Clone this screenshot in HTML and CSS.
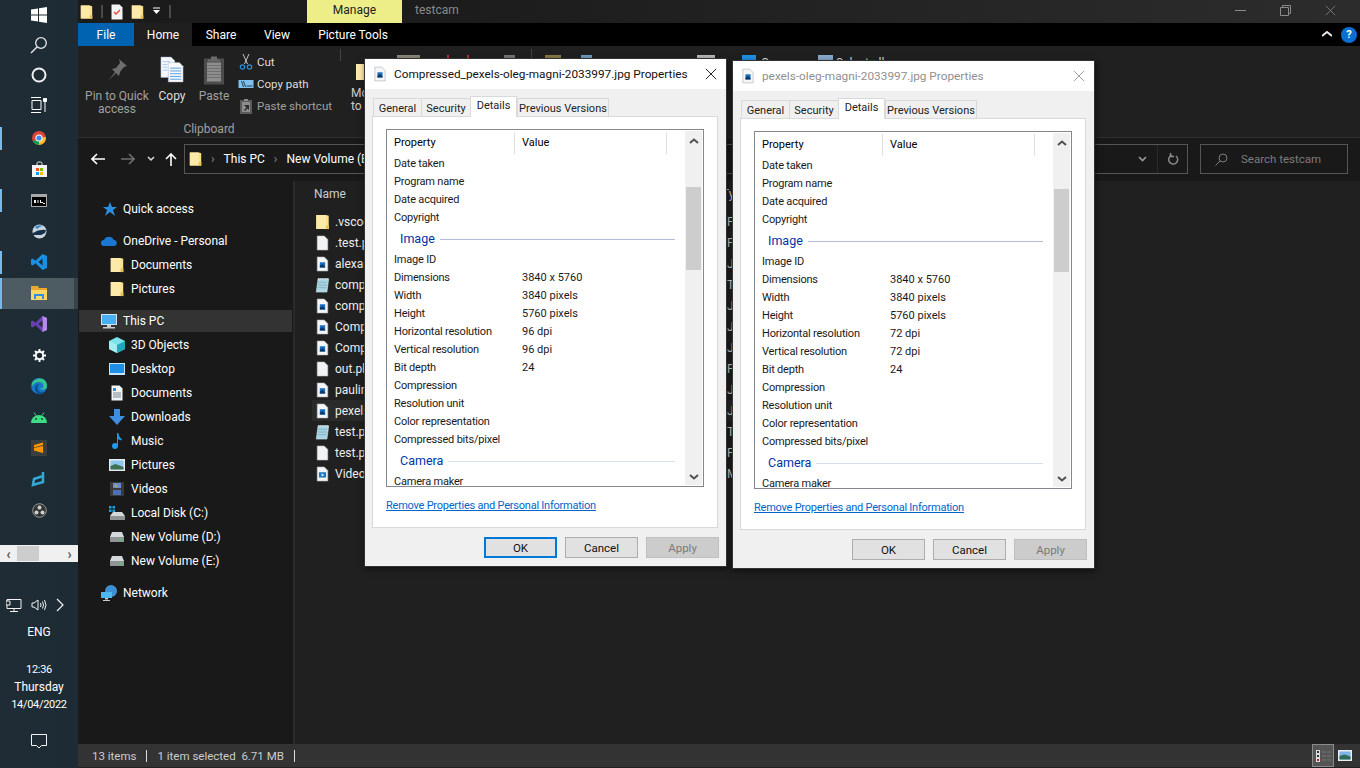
FILE: index.html
```html
<!DOCTYPE html>
<html lang="en">
<head>
<meta charset="utf-8">
<title>testcam</title>
<link rel="stylesheet" href="styles.css">
</head>
<body>
<svg class="defs" width="0" height="0" aria-hidden="true">
  <symbol id="folder" viewBox="0 0 16 18"><path d="M1 1h11l3 1v15H1z" fill="#fbe08a"/><path d="M1 1h11v12h3v4H1z" fill="#fde9a8"/><path d="M12 13h3v4h-3z" fill="#e9bd52"/></symbol>
  <symbol id="pagepic" viewBox="0 0 14 18"><path d="M1 1h8l4 4v12H1z" fill="#f4f6f8" stroke="#9aa0a6" stroke-width=".6"/><path d="M4 7h6v6H4z" fill="#1f6fc0"/><path d="M4 11l3-2 3 3v1H4z" fill="#0c3766"/></symbol>
  <symbol id="page" viewBox="0 0 14 18"><path d="M1 1h8l4 4v12H1z" fill="#f2f3f5" stroke="#a9adb2" stroke-width=".6"/></symbol>
  <symbol id="note" viewBox="0 0 16 18"><path d="M3 2h12l-2 15H1z" fill="#a9d4e2" stroke="#dfeff5" stroke-width=".6"/><path d="M3 2h12" stroke="#fff" stroke-dasharray="1 1"/><path d="M3 6h10M3 9h10M2 12h10" stroke="#6fa3b8" stroke-width=".7"/></symbol>
  <symbol id="vid" viewBox="0 0 14 18"><path d="M1 1h8l4 4v12H1z" fill="#f2f4f6" stroke="#a9adb2" stroke-width=".6"/><path d="M3 7h8v6H3z" fill="#1b78c4"/><path d="M6 8.500l3 1.500-3 1.500z" fill="#fff"/></symbol>
  <symbol id="drive" viewBox="0 0 16 12"><path d="M3 1h10l2 5H1z" fill="#d5d8da"/><path d="M1 6h14v5H1z" fill="#8f9497"/><path d="M11 8h2v1.500h-2z" fill="#45d35a"/></symbol>
  <symbol id="chev-up" viewBox="0 0 10 8"><path d="M1 6l4-3.500L9 6" fill="none" stroke="#505050" stroke-width="2"/></symbol>
  <symbol id="chev-down" viewBox="0 0 10 8"><path d="M1 2l4 3.500L9 2" fill="none" stroke="#505050" stroke-width="2"/></symbol>
  <symbol id="x" viewBox="0 0 14 14"><path d="M1 1l12 12M13 1L1 13" fill="none" stroke="currentColor" stroke-width="1"/></symbol>
</svg>

<aside class="taskbar">
  <div class="tb-icons">
    <div class="tb-slot"><svg width="16" height="16" viewBox="0 0 16 16"><path d="M0 2.500l7-1V7.500H0zM8 1.300l8-1.300v7.500H8zM0 8.500h7v6l-7-1zM8 8.500h8V16l-8-1.200z" fill="#fff"/></svg></div>
    <div class="tb-slot"><svg width="18" height="18" viewBox="0 0 18 18"><circle cx="11" cy="7" r="5.300" fill="none" stroke="#e8e8e8" stroke-width="1.300"/><path d="M7 11l-6 6" stroke="#e8e8e8" stroke-width="1.500"/></svg></div>
    <div class="tb-slot"><svg width="16" height="16" viewBox="0 0 16 16"><circle cx="8" cy="8" r="6.500" fill="none" stroke="#f0f0f0" stroke-width="2"/></svg></div>
    <div class="tb-slot tb-slot-last"><svg width="16" height="16" viewBox="0 0 16 16" fill="none" stroke="#fff"><path d="M0 .5h10M0 15.500h10M1 3.500h9v9H1zM14 5v10"/><path d="M12.500 1.500h3v3h-3z" fill="#fff"/></svg></div>

    <div class="tb-slot is-open"><svg width="14" height="14" viewBox="0 0 14 14"><circle cx="7" cy="7" r="7" fill="#db4437"/><path d="M7 7L1 10.500A7 7 0 0 0 7 14z" fill="#0f9d58"/><path d="M7 7l6.900-1A7 7 0 0 1 7 14z" fill="#fbc02d"/><circle cx="7" cy="7" r="3.600" fill="#fff"/><circle cx="7" cy="7" r="2.600" fill="#4285f4"/></svg></div>
    <div class="tb-slot"><svg width="15" height="16" viewBox="0 0 15 16"><path d="M5 4V2.500A1.500 1.500 0 0 1 6.500 1h2A1.500 1.500 0 0 1 10 2.500V4" fill="none" stroke="#eee"/><path d="M0 4h15v12H0z" fill="#f4f4f4"/><path d="M4 7h3v3H4z" fill="#f25022"/><path d="M8 7h3v3H8z" fill="#7fba00"/><path d="M4 11h3v3H4z" fill="#00a4ef"/><path d="M8 11h3v3H8z" fill="#ffb900"/></svg></div>
    <div class="tb-slot is-open"><svg width="16" height="13" viewBox="0 0 16 13"><path d="M0 0h16v13H0z" fill="#a8a8a8"/><path d="M1 3h14v9H1z" fill="#000"/><path d="M3 6h2v3H3zM6.500 6h1v3h-1zM9 6h1v2h2v1H9zM12 9h2v1h-2z" fill="#eee"/></svg></div>
    <div class="tb-slot"><svg width="15" height="15" viewBox="0 0 15 15"><circle cx="7.500" cy="7.500" r="7" fill="#c9d3dc"/><path d="M1 9q6-4 13-3l-1 3-4 2-8 0z" fill="#17314a"/><path d="M3 3q4-3 8-1-3 0-6 3z" fill="#2f86d0"/></svg></div>
    <div class="tb-slot is-open"><svg width="16" height="16" viewBox="0 0 16 16"><path d="M11.500 0L16 2v12l-4.500 2L4.500 9.200 1.700 11.500 0 10.600V5.400l1.700-.9 2.800 2.300zM11.500 4.500L7.500 8l4 3.500z" fill="#1a8fe0"/></svg></div>
    <div class="tb-slot is-active"><svg width="16" height="14" viewBox="0 0 16 14"><path d="M0 0h7l1 2h8v2H0z" fill="#e8a92c"/><path d="M0 4h16v10H0z" fill="#fcd667"/><path d="M3 8h10v2H3z" fill="#2f8fd8"/><path d="M3 8h2v5H3zM11 8h2v5h-2z" fill="#2f8fd8"/></svg></div>
    <div class="tb-slot"><svg width="16" height="16" viewBox="0 0 16 16"><path d="M11.500 0L16 2v12l-4.500 2L4.500 9.200 1.700 11.500 0 10.600V5.400l1.700-.9 2.800 2.300z" fill="#6a3fb0"/><path d="M11.500 0L16 2v12l-4.500 2z" fill="#b58ae8"/><path d="M11.500 4.500L7.500 8l4 3.500z" fill="#1f2d37"/></svg></div>
    <div class="tb-slot"><svg width="13" height="13" viewBox="0 0 13 13"><circle cx="6.500" cy="6.500" r="3.700" fill="none" stroke="#fff" stroke-width="2"/><path d="M6.500 0v2.500M6.500 10.500V13M0 6.500h2.500M10.500 6.500H13M2 2l1.700 1.700M9.300 9.300L11 11M11 2L9.300 3.700M3.700 9.300L2 11" stroke="#fff" stroke-width="2"/></svg></div>
    <div class="tb-slot"><svg width="16" height="16" viewBox="0 0 16 16"><circle cx="8" cy="8" r="8" fill="#1778c8"/><path d="M1 5Q5-1 12 1q4 2 4 7 0 3-3 3.500-3 .5-4.500-1.500 4 1 4-2Q12 4 8 4 4 4 1 8z" fill="#36c28e"/><path d="M8 16Q3 14 4 9q1-3 4-3-3 4 0 7 2 1.500 5 .5-2 2-5 2z" fill="#0c4f98"/></svg></div>
    <div class="tb-slot"><svg width="16" height="11" viewBox="0 0 16 11"><path d="M0 11a8 8 0 0 1 16 0z" fill="#3ddc84"/><path d="M3 .5l2 3M13 .5l-2 3" stroke="#3ddc84"/><circle cx="5" cy="7" r=".9" fill="#1f2d37"/><circle cx="11" cy="7" r=".9" fill="#1f2d37"/></svg></div>
    <div class="tb-slot"><svg width="16" height="16" viewBox="0 0 16 16"><path d="M0 0h16v16H0z" fill="#3c3d3e"/><path d="M3 5l9-2.500v2.500L3 7.500zM3 8l9 2.500v2.500L3 10.500z M3 8l9-2v4.500z" fill="#ff9800"/></svg></div>
    <div class="tb-slot"><svg width="16" height="16" viewBox="0 0 16 16" fill="none" stroke="#33a9d6" stroke-width="2.500"><path d="M12 1v10L2 14l1-6 9-3"/></svg></div>
    <div class="tb-slot"><svg width="15" height="15" viewBox="0 0 15 15"><circle cx="7.500" cy="7.500" r="6.800" fill="#333" stroke="#9a9a9a"/><circle cx="7.500" cy="4.500" r="2" fill="#cfcfcf"/><circle cx="4.500" cy="9.500" r="2" fill="#cfcfcf"/><circle cx="10.500" cy="9.500" r="2" fill="#cfcfcf"/></svg></div>
  </div>
  <div class="tb-scroll"><span class="tb-arrow">‹</span><span class="tb-thumb"></span><span class="tb-spacer"></span><span class="tb-arrow">›</span></div>
  <div class="tray">
    <svg width="16" height="14" viewBox="0 0 16 14" fill="none" stroke="#f2f2f2"><path d="M1 1.500h14v9H1zM8 10.500V13M4 13.500h8"/><path d="M0 3h4v4H0z" fill="#1f2d37"/></svg>
    <svg width="16" height="14" viewBox="0 0 16 14" fill="none" stroke="#f2f2f2"><path d="M1 5h2l4-3v10L3 9H1zM9.500 5q1 2 0 4M11.500 3.500q2 3.500 0 7M13.500 2q3 5 0 10"/></svg>
    <svg width="9" height="14" viewBox="0 0 9 14" fill="none" stroke="#f2f2f2" stroke-width="1.200"><path d="M1 1l6 6-6 6"/></svg>
  </div>
  <div class="tb-lang">ENG</div>
  <div class="tb-clock"><div class="tb-num">12:36</div><div>Thursday</div><div class="tb-num">14/04/2022</div></div>
  <div class="tb-notify"><svg width="16" height="16" viewBox="0 0 16 16" fill="none" stroke="#f2f2f2"><path d="M.5 1.500h15v11h-5L8 15l-2.500-2.500h-5z"/></svg></div>
</aside>

<main class="explorer">
  <header class="titlebar">
    <div class="qat">
      <svg class="qat-ic" width="13" height="16"><use href="#folder"/></svg>
      <span class="qat-sep"></span>
      <svg class="qat-ic qat-gap" width="12" height="16" viewBox="0 0 12 16"><path d="M.5.500h8l3 3v12H.5z" fill="#f4f4f4"/><path d="M3 8l2 2 4-4" fill="none" stroke="#e5532d" stroke-width="1.500"/></svg>
      <svg class="qat-ic qat-gap" width="13" height="16"><use href="#folder"/></svg>
      <svg class="qat-ic qat-gap2" width="9" height="9" viewBox="0 0 9 9"><path d="M1 1h7" stroke="#fff"/><path d="M1 3h7L4.500 7z" fill="#fff"/></svg>
      <span class="qat-sep"></span>
    </div>
    <div class="manage">Manage</div>
    <div class="win-title">testcam</div>
    <div class="win-ctrl">
      <span class="wc"><svg width="11" height="11" viewBox="0 0 11 11"><path d="M0 5.500h11" stroke="#8a8a8a"/></svg></span>
      <span class="wc"><svg width="11" height="11" viewBox="0 0 11 11" fill="none" stroke="#8a8a8a"><path d="M.5 2.500h8v8h-8zM2.500 2.500V.5h8v8H8.500"/></svg></span>
      <span class="wc wc-close"><svg width="11" height="11"><use href="#x"/></svg></span>
    </div>
  </header>

  <nav class="tabs">
    <span class="tab tab-file">File</span>
    <span class="tab tab-home">Home</span>
    <span class="tab tab-share">Share</span>
    <span class="tab tab-view">View</span>
    <span class="tab tab-pic">Picture Tools</span>
    <span class="tabs-right">
      <svg width="10" height="7" viewBox="0 0 10 7"><path d="M0 5l5-4 5 4" fill="none" stroke="#e8e8e8" stroke-width="2"/></svg>
      <span class="help">?</span>
    </span>
  </nav>

  <section class="ribbon">
    <div class="rib-group">
      <div class="rib-items">
        <div class="rib-big rib-pin">
          <svg width="22" height="24" viewBox="0 0 22 24"><path d="M13 1l8 7-3 1-4 5-1 4-3-3-7 7 6-8-3-3 4-1 4-5z" fill="#6e6e6e"/></svg>
          <span>Pin to Quick access</span>
        </div>
        <div class="rib-big rib-copy">
          <svg width="24" height="30" viewBox="0 0 26 30"><path d="M1 1h11l4 4v18H1z" fill="#f6f8fb" stroke="#9fb0c4" stroke-width=".5"/><path d="M9 7h12l4 4v17H9z" fill="#f6f8fb" stroke="#9fb0c4" stroke-width=".5"/><path d="M11 13h12M11 16h12M11 19h12M11 22h12M11 25h12" stroke="#4e9ae8"/><path d="M3 6h8M3 9h5M3 12h5M3 15h5" stroke="#9fc3ef"/></svg>
          <span>Copy</span>
        </div>
        <div class="rib-big rib-paste">
          <svg width="20" height="29" viewBox="0 0 20 29"><path d="M0 3h20v26H0z" fill="#4c4c4c"/><path d="M7 1h6v3h3v2H4V4h3z" fill="#6a6a6a"/><path d="M3 7h14v19H3z" fill="#8d8d8d"/><path d="M3 10h14M3 13h14M3 16h14M3 19h14M3 22h14" stroke="#6f6f6f"/></svg>
          <span>Paste</span>
        </div>
        <div class="rib-small">
          <div class="rib-row"><svg width="12" height="16" viewBox="0 0 12 16" fill="none"><path d="M3 0l4.500 10M9 0L4.500 10" stroke="#bfc4c9"/><circle cx="2.500" cy="13" r="2.200" stroke="#2a8fd8" stroke-width="1.200"/><circle cx="9.500" cy="13" r="2.200" stroke="#2a8fd8" stroke-width="1.200"/></svg><span>Cut</span></div>
          <div class="rib-row"><svg width="15" height="8" viewBox="0 0 15 8"><path d="M0 0h15v8H0z" fill="#7fc2ee"/><path d="M3 1l2 6M5 1l2 6M8 6h6" stroke="#23445e"/></svg><span>Copy path</span></div>
          <div class="rib-row rib-dim"><svg width="12" height="15" viewBox="0 0 12 15"><path d="M0 1h12v14H0z" fill="#5a5a5a"/><path d="M4 0h4v2H4z" fill="#8a8a8a"/><path d="M2 3h8v10H2z" fill="#8d8d8d"/><path d="M4 6h5v5L7.500 9.500 5 12l-1-1 2.500-2.500z" fill="#2c2c2c"/></svg><span>Paste shortcut</span></div>
        </div>
      </div>
      <div class="rib-label">Clipboard</div>
    </div>
    <div class="rib-sep"></div>
    <div class="rib-move">
      <svg width="16" height="32"><use href="#folder"/></svg>
      <span>Move to</span>
    </div>
    <div class="rib-more">
      <span class="fr fr-copyto"></span>
      <span class="fr fr-red1"></span>
      <span class="fr fr-red2"></span>
      <span class="fr fr-rename"></span>
      <span class="fr fr-sep"></span>
      <span class="fr fr-newfolder"></span>
      <span class="fr fr-newitem"></span>
      <span class="fr-text fr-newitem-label">New item</span>
      <span class="fr fr-props"></span>
      <span class="fr fr-open"></span>
      <span class="fr-text fr-open-label">Open ▾</span>
      <span class="fr fr-select"></span>
      <span class="fr-text">Select all</span>
    </div>
  </section>

  <div class="addr">
    <div class="nav-btns">
      <svg width="14" height="12" viewBox="0 0 14 12" fill="none" stroke="#fff" stroke-width="1.600"><path d="M14 6H1M6 1L1 6l5 5"/></svg>
      <svg width="14" height="12" viewBox="0 0 14 12" fill="none" stroke="#6e6e6e" stroke-width="1.600"><path d="M0 6h13M8 1l5 5-5 5"/></svg>
      <svg width="8" height="6" viewBox="0 0 8 6" fill="none" stroke="#ddd" stroke-width="1.500"><path d="M1 1l3 3 3-3"/></svg>
      <svg width="12" height="13" viewBox="0 0 12 13" fill="none" stroke="#fff" stroke-width="1.600"><path d="M6 13V1M1 6l5-5 5 5"/></svg>
    </div>
    <div class="addr-box">
      <svg width="13" height="16"><use href="#folder"/></svg>
      <span class="crumb-sep">›</span><span>This PC</span><span class="crumb-sep">›</span><span>New Volume (E:)</span>
      <span class="addr-end">
        <svg width="9" height="6" viewBox="0 0 9 6" fill="none" stroke="#9a9a9a" stroke-width="1.600"><path d="M1 1l3.500 3.500L8 1"/></svg>
        <span class="addr-div"></span>
        <svg width="11" height="12" viewBox="0 0 11 12" fill="none" stroke="#8a8a8a" stroke-width="1.500"><path d="M8 3a4.500 4.500 0 1 1-4-.8"/><path d="M2.500 0v3.500h3.500"/></svg>
      </span>
    </div>
    <div class="search-box">
      <svg width="13" height="13" viewBox="0 0 13 13" fill="none" stroke="#7c7c7c"><circle cx="8" cy="5" r="4"/><path d="M5 8l-4.500 4.500"/></svg>
      <span>Search testcam</span>
    </div>
  </div>

  <div class="body">
    <div class="navpane">
      <div class="nv nv-first"><svg class="ic" width="16" height="14" viewBox="0 0 16 14"><path d="M9 0l2 5h5l-4 3 2 6-5-4-5 4 2-6-4-3h5z" fill="#2b8fe0"/></svg>Quick access</div>
      <div class="nv nv-gap"><svg class="ic" width="16" height="10" viewBox="0 0 16 10"><path d="M3 10a3 3 0 0 1 0-6q2-4 6-3 3 0 3.500 3a3 3 0 0 1 .5 6z" fill="#1b78d0"/></svg>OneDrive - Personal</div>
      <div class="nv nv-sub"><svg class="ic" width="13" height="16"><use href="#folder"/></svg>Documents</div>
      <div class="nv nv-sub"><svg class="ic" width="13" height="16"><use href="#folder"/></svg>Pictures</div>
      <div class="nv nv-gap nv-sel"><svg class="ic" width="16" height="15" viewBox="0 0 16 15"><path d="M0 0h16v11H0z" fill="#cfe4f5"/><path d="M1 1h14v9H1z" fill="#48b0f0"/><path d="M6 11h4v2H6zM2 13h12v1.500H2z" fill="#c8ccd0"/></svg>This PC</div>
      <div class="nv nv-sub"><svg class="ic" width="16" height="16" viewBox="0 0 16 16"><path d="M8 0l8 4v8l-8 4-8-4V4z" fill="#7de3ea"/><path d="M0 4l8 4v8l-8-4z" fill="#a3eef2"/><path d="M16 4L8 8v8l8-4z" fill="#1da9b8"/></svg>3D Objects</div>
      <div class="nv nv-sub"><svg class="ic" width="16" height="12" viewBox="0 0 16 12"><path d="M0 0h16v12H0z" fill="#c8e4f8"/><path d="M1 1h14v9H1z" fill="#1e8fe6"/></svg>Desktop</div>
      <div class="nv nv-sub"><svg class="ic" width="12" height="16" viewBox="0 0 12 16"><path d="M.5.500h8l3 3v12H.5z" fill="#f4f6f8"/><path d="M2 8h8M2 10h8M2 12h8" stroke="#7a8590"/><path d="M2 3h3v3H2z" fill="#2b8fe0"/></svg>Documents</div>
      <div class="nv nv-sub"><svg class="ic" width="16" height="16" viewBox="0 0 16 16"><path d="M5 0h6v7h5l-8 9-8-9h5z" fill="#3b8ee0"/></svg>Downloads</div>
      <div class="nv nv-sub"><svg class="ic" width="12" height="16" viewBox="0 0 12 16"><circle cx="4" cy="13" r="3" fill="#1b9bee"/><path d="M6 0h1.500q0 4 3.500 6l-1 1.500Q8 6.500 7 6v7H6z" fill="#1b9bee"/></svg>Music</div>
      <div class="nv nv-sub"><svg class="ic" width="16" height="12" viewBox="0 0 16 12"><path d="M0 0h16v12H0z" fill="#e8ecef"/><path d="M1.500 1.500h13v9h-13z" fill="#8ec7ee"/><path d="M1.500 7l5-2 8 3v2.500h-13z" fill="#3d6f52"/></svg>Pictures</div>
      <div class="nv nv-sub"><svg class="ic" width="14" height="14" viewBox="0 0 14 14"><path d="M0 0h14v14H0z" fill="#3a3a3a"/><path d="M3 1h8v5H3z" fill="#6b8bc4"/><path d="M3 8h8v5H3z" fill="#4a6fb8"/><path d="M5 2l3 3H5z" fill="#e0a030"/></svg>Videos</div>
      <div class="nv nv-sub"><svg class="ic" width="16" height="14" viewBox="0 0 16 14"><path d="M0 0h2.500v2.500H0zM3.500 0H6v2.500H3.500zM0 3.500h2.500V6H0zM3.500 3.500H6V6H3.500z" fill="#1ba1e2"/><path d="M4 6h9l3 4H1z" fill="#d5d8da"/><path d="M1 10h15v4H1z" fill="#8f9497"/></svg>Local Disk (C:)</div>
      <div class="nv nv-sub"><svg class="ic" width="16" height="12"><use href="#drive"/></svg>New Volume (D:)</div>
      <div class="nv nv-sub"><svg class="ic" width="16" height="12"><use href="#drive"/></svg>New Volume (E:)</div>
      <div class="nv nv-gap"><svg class="ic" width="16" height="16" viewBox="0 0 16 16"><circle cx="10" cy="6" r="6" fill="#3f8fd4"/><path d="M0 7h11v6H0z" fill="#50b8f0"/><path d="M4 13h3v1.500H4zM2 15h7v1H2z" fill="#c8ccd0"/></svg>Network</div>
    </div>
    <div class="files">
      <div class="col-head"><span class="fn">Name</span><span class="ft">Type</span></div>
      <div class="f"><svg class="fic" width="13" height="16"><use href="#folder"/></svg><span class="fn">.vscode</span><span class="ft">File folder</span></div>
      <div class="f"><svg class="fic" width="12" height="16"><use href="#page"/></svg><span class="fn">.test.py</span><span class="ft">PY File</span></div>
      <div class="f"><svg class="fic" width="12" height="16"><use href="#pagepic"/></svg><span class="fn">alexander.jpg</span><span class="ft">JPG File</span></div>
      <div class="f"><svg class="fic" width="15" height="16"><use href="#note"/></svg><span class="fn">compress.txt</span><span class="ft">Text Document</span></div>
      <div class="f"><svg class="fic" width="12" height="16"><use href="#pagepic"/></svg><span class="fn">compressed.jpg</span><span class="ft">JPG File</span></div>
      <div class="f"><svg class="fic" width="12" height="16"><use href="#pagepic"/></svg><span class="fn">Compressed_1.jpg</span><span class="ft">JPG File</span></div>
      <div class="f"><svg class="fic" width="12" height="16"><use href="#pagepic"/></svg><span class="fn">Compressed_2.jpg</span><span class="ft">JPG File</span></div>
      <div class="f"><svg class="fic" width="12" height="16"><use href="#page"/></svg><span class="fn">out.pkl</span><span class="ft">PKL File</span></div>
      <div class="f"><svg class="fic" width="12" height="16"><use href="#pagepic"/></svg><span class="fn">pauline.jpg</span><span class="ft">JPG File</span></div>
      <div class="f f-sel"><svg class="fic" width="12" height="16"><use href="#pagepic"/></svg><span class="fn">pexels-oleg-magni-2033997.jpg</span><span class="ft">JPG File</span></div>
      <div class="f"><svg class="fic" width="15" height="16"><use href="#note"/></svg><span class="fn">test.py.txt</span><span class="ft">Text Document</span></div>
      <div class="f"><svg class="fic" width="12" height="16"><use href="#page"/></svg><span class="fn">test.py</span><span class="ft">PY File</span></div>
      <div class="f"><svg class="fic" width="12" height="16"><use href="#vid"/></svg><span class="fn">Video.mp4</span><span class="ft">MP4 File</span></div>
    </div>
  </div>

  <footer class="status">
    <span>13 items</span><span class="st-sep"></span><span>1 item selected&nbsp; 6.71 MB</span><span class="st-sep"></span>
    <span class="st-views">
      <span class="view view-on"><svg width="16" height="14" viewBox="0 0 16 14"><path d="M1 1h4v12H1z" fill="#ddd"/><path d="M7 3h4M12 3h4M7 7h4M12 7h4M7 11h4M12 11h4" stroke="#777"/><path d="M2 2h2v2H2zM2 6h2v2H2z" fill="#333"/><path d="M2 10h2v2H2z" fill="#b22"/></svg></span>
      <span class="view"><svg width="14" height="11" viewBox="0 0 14 11"><path d="M0 0h14v11H0z" fill="#eee"/><path d="M1.500 1.500h11v8h-11z" fill="#7cb4ea"/><path d="M1.500 6l5-1.500 6 2v3h-11z" fill="#2f6b57"/></svg></span>
    </span>
  </footer>
</main>

<section class="dialog dialog-a">
  <div class="dlg-title">
    <svg class="dlg-ic" width="12" height="16"><use href="#pagepic"/></svg>
    <span class="dlg-name">Compressed_pexels-oleg-magni-2033997.jpg Properties</span>
    <svg class="dlg-close" width="12" height="12"><use href="#x"/></svg>
  </div>
  <div class="dlg-tabs"><span class="dt">General</span><span class="dt">Security</span><span class="dt dt-on">Details</span><span class="dt">Previous Versions</span></div>
  <div class="dlg-panel">
    <div class="listbox">
      <div class="lb-head"><span class="lh lh-prop">Property</span><span class="lh lh-val">Value</span><span class="lh-rest"></span></div>
      <div class="lb-rows">
        <div class="r"><span class="k">Date taken</span></div>
        <div class="r"><span class="k">Program name</span></div>
        <div class="r"><span class="k">Date acquired</span></div>
        <div class="r"><span class="k">Copyright</span></div>
        <div class="grp"><span>Image</span><i></i></div>
        <div class="r"><span class="k">Image ID</span></div>
        <div class="r"><span class="k">Dimensions</span><span>3840 x 5760</span></div>
        <div class="r"><span class="k">Width</span><span>3840 pixels</span></div>
        <div class="r"><span class="k">Height</span><span>5760 pixels</span></div>
        <div class="r"><span class="k">Horizontal resolution</span><span>96 dpi</span></div>
        <div class="r"><span class="k">Vertical resolution</span><span>96 dpi</span></div>
        <div class="r"><span class="k">Bit depth</span><span>24</span></div>
        <div class="r"><span class="k">Compression</span></div>
        <div class="r"><span class="k">Resolution unit</span></div>
        <div class="r"><span class="k">Color representation</span></div>
        <div class="r"><span class="k">Compressed bits/pixel</span></div>
        <div class="grp grp-light"><span>Camera</span><i></i></div>
        <div class="r"><span class="k">Camera maker</span></div>
      </div>
      <div class="lb-scroll">
        <svg class="lb-arrow" width="10" height="8"><use href="#chev-up"/></svg>
        <span class="lb-thumb"></span>
        <svg class="lb-arrow lb-arrow-end" width="10" height="8"><use href="#chev-down"/></svg>
      </div>
    </div>
    <a class="dlg-link" href="#">Remove Properties and Personal Information</a>
  </div>
  <div class="dlg-btns"><span class="btn btn-default">OK</span><span class="btn">Cancel</span><span class="btn btn-off">Apply</span></div>
</section>

<section class="dialog dialog-b">
  <div class="dlg-title">
    <svg class="dlg-ic" width="12" height="16"><use href="#pagepic"/></svg>
    <span class="dlg-name">pexels-oleg-magni-2033997.jpg Properties</span>
    <svg class="dlg-close" width="12" height="12"><use href="#x"/></svg>
  </div>
  <div class="dlg-tabs"><span class="dt">General</span><span class="dt">Security</span><span class="dt dt-on">Details</span><span class="dt">Previous Versions</span></div>
  <div class="dlg-panel">
    <div class="listbox">
      <div class="lb-head"><span class="lh lh-prop">Property</span><span class="lh lh-val">Value</span><span class="lh-rest"></span></div>
      <div class="lb-rows">
        <div class="r"><span class="k">Date taken</span></div>
        <div class="r"><span class="k">Program name</span></div>
        <div class="r"><span class="k">Date acquired</span></div>
        <div class="r"><span class="k">Copyright</span></div>
        <div class="grp"><span>Image</span><i></i></div>
        <div class="r"><span class="k">Image ID</span></div>
        <div class="r"><span class="k">Dimensions</span><span>3840 x 5760</span></div>
        <div class="r"><span class="k">Width</span><span>3840 pixels</span></div>
        <div class="r"><span class="k">Height</span><span>5760 pixels</span></div>
        <div class="r"><span class="k">Horizontal resolution</span><span>72 dpi</span></div>
        <div class="r"><span class="k">Vertical resolution</span><span>72 dpi</span></div>
        <div class="r"><span class="k">Bit depth</span><span>24</span></div>
        <div class="r"><span class="k">Compression</span></div>
        <div class="r"><span class="k">Resolution unit</span></div>
        <div class="r"><span class="k">Color representation</span></div>
        <div class="r"><span class="k">Compressed bits/pixel</span></div>
        <div class="grp grp-light"><span>Camera</span><i></i></div>
        <div class="r"><span class="k">Camera maker</span></div>
      </div>
      <div class="lb-scroll">
        <svg class="lb-arrow" width="10" height="8"><use href="#chev-up"/></svg>
        <span class="lb-thumb"></span>
        <svg class="lb-arrow lb-arrow-end" width="10" height="8"><use href="#chev-down"/></svg>
      </div>
    </div>
    <a class="dlg-link" href="#">Remove Properties and Personal Information</a>
  </div>
  <div class="dlg-btns"><span class="btn">OK</span><span class="btn">Cancel</span><span class="btn btn-off">Apply</span></div>
</section>
</body>
</html>
```
FILE: styles.css
```css
* { box-sizing: border-box; }
html, body { height: 100%; }
body {
  margin: 0; height: 768px; overflow: hidden; display: flex;
  font: 12px/16px Roboto, "Noto Sans", sans-serif; color: #fff; background: #1f2d37;
}
.defs { position: absolute; }

/* Taskbar */
.taskbar { width: 78px; flex: none; height: 768px; display: flex; flex-direction: column; background: linear-gradient(90deg, #1f2c35, #1c2b34); }
.tb-icons { display: flex; flex-direction: column; }
.tb-slot { height: 31px; display: flex; align-items: center; justify-content: center; border-left: 2px solid transparent; padding-right: 2px; }
.tb-slot:nth-child(-n+4) { height: 30px; }
.tb-slot:nth-child(n+5) { padding-bottom: 1px; }
.tb-slot-last { margin-bottom: 3px; }
.is-open { position: relative; }
.is-open::before { content: ""; position: absolute; left: -2px; top: 4px; bottom: 4px; width: 2px; background: #76b9ed; }
.is-active { background: linear-gradient(90deg, #4d5b63 72px, #36434b 72px); border-left-color: #76b9ed; }
.tb-scroll { margin-top: 19px; height: 17px; background: #f0f0f0; display: flex; align-items: center; color: #555; font-weight: 700; font-size: 14px; }
.tb-arrow { width: 17px; text-align: center; flex: none; }
.tb-thumb { width: 22px; height: 15px; background: #cdcdcd; }
.tb-spacer { flex: 1; }
.tray { margin-top: 35px; height: 16px; display: flex; align-items: center; justify-content: center; gap: 9px; padding-right: 8px; }
.tb-lang { margin-top: 11px; height: 16px; text-align: center; }
.tb-clock { margin-top: 21px; text-align: center; line-height: 17.500px; }
.tb-num { font-size: 11px; letter-spacing: -.3px; }
.tb-notify { margin-top: 19px; display: flex; justify-content: center; }

/* Explorer */
.explorer { flex: 1; min-width: 0; height: 768px; display: flex; flex-direction: column; background: #202020; }
.titlebar { height: 23px; flex: none; display: flex; align-items: stretch; background: linear-gradient(90deg, #1b1b1b 0, #1c1c1c 30%, #2c2c2c 100%); }
.qat { width: 229px; display: flex; align-items: center; padding-left: 2px; flex: none; }
.qat-sep { width: 2px; height: 13px; margin-left: 8px; background: #4a4a4a; }
.qat-gap { margin-left: 8px; }
.qat-gap2 { margin-left: 8px; }
.manage { width: 95px; flex: none; background: #eeee88; color: #222; text-align: center; line-height: 21px; }
.win-title { padding-left: 13px; line-height: 21px; color: #8a8a8a; }
.win-ctrl { margin-left: auto; display: flex; align-items: center; }
.wc { width: 45px; display: flex; justify-content: center; margin-bottom: 3px; }
.wc-close { color: #8a8a8a; margin-right: 7px; }

.tabs { height: 23px; flex: none; background: #000; display: flex; align-items: center; }
.tab { height: 23px; line-height: 24px; flex: none; text-align: center; }
.tab-file { width: 56px; background: #0063b1; }
.tab-home { width: 58px; background: #1f1f1f; }
.tab-share { width: 58px; }
.tab-view { width: 54px; }
.tab-pic { width: 98px; }
.tabs-right { margin-left: auto; margin-right: 3px; display: flex; align-items: center; gap: 9px; }
.help { width: 16px; height: 16px; border-radius: 50%; background: #0a6fd0; font-weight: 700; text-align: center; line-height: 16px; font-size: 11px; }

.ribbon { height: 92px; flex: none; background: #202020; border-bottom: 1px solid #2e2e2e; display: flex; overflow: hidden; }
.rib-group { width: 262px; flex: none; display: flex; flex-direction: column; }
.rib-items { height: 76px; display: flex; }
.rib-big { display: flex; flex-direction: column; align-items: center; color: #b5b5b5; text-align: center; line-height: 13px; flex: none; }
.rib-big svg { height: 32px; margin-top: 8px; margin-bottom: 4px; flex: none; }
.rib-pin { width: 78px; color: #a0a0a0; padding: 0 6px; }
.rib-pin svg { margin-top: 8px; margin-bottom: 4px; }
.rib-copy { width: 38px; margin-left: -3px; color: #ddd; }
.rib-paste { width: 46px; color: #a0a0a0; }
.rib-small { margin-left: 1px; padding-top: 5px; display: flex; flex-direction: column; }
.rib-row { height: 22px; display: flex; align-items: center; gap: 3px; white-space: nowrap; color: #ddd; font-size: 11.500px; }
.rib-row svg { width: 16px; flex: none; }
.rib-dim { color: #a0a0a0; }
.rib-label { text-align: center; color: #a0a0a0; }
.rib-sep { width: 1px; height: 12px; background: #444; margin-top: 3px; flex: none; }
.rib-move { margin-left: 10px; margin-top: 12px; display: flex; flex-direction: column; color: #ccc; line-height: 13px; width: 16px; gap: 1px; flex: none; }
.rib-move svg { height: 28px; flex: none; margin-left: 4px; }
.rib-more { display: flex; align-items: flex-start; padding-top: 9px; color: #ddd; white-space: nowrap; }
.fr { display: block; height: 12px; flex: none; }
.fr-text { line-height: 16px; flex: none; }
.fr-copyto { width: 23px; margin-left: 30px; background: #8f8a7a; }
.fr-red1 { width: 2px; margin-left: 27px; background: #c03030; }
.fr-red2 { width: 2px; margin-left: 18px; background: #c03030; }
.fr-rename { width: 11px; margin-left: 35px; background: #777; }
.fr-sep { width: 1px; margin-left: 16px; margin-top: -6px; height: 18px; background: #444; }
.fr-newfolder { width: 16px; margin-left: 13px; background: #8a7a45; }
.fr-newitem { width: 11px; margin-left: 20px; background: #6d9cc0; }
.fr-newitem-label { margin-left: 9px; width: 28px; overflow: hidden; color: #999; }
.fr-props { width: 18px; margin-left: 68px; background: #bbb; }
.fr-open { width: 14px; margin-left: 27px; background: #1f8ee0; }
.fr-open-label { margin-left: 5px; width: 36px; }
.fr-select { width: 15px; margin-left: 21px; background: #86a9cf; margin-right: 3px; }

.addr { height: 43px; flex: none; background: #191919; display: flex; align-items: flex-start; padding-top: 6px; }
.nav-btns { width: 106px; height: 30px; display: flex; align-items: center; padding-left: 13px; flex: none; }
.nav-btns svg:nth-child(2) { margin-left: 16px; }
.nav-btns svg:nth-child(3) { margin-left: 12px; }
.nav-btns svg:nth-child(4) { margin-left: 10px; }
.addr-box { width: 1004px; height: 30px; border: 1px solid #555; display: flex; align-items: center; padding-left: 4px; gap: 9px; white-space: nowrap; flex: none; }
.crumb-sep { color: #8a8a8a; }
.addr-end { margin-left: auto; display: flex; align-items: center; gap: 10px; padding-right: 8px; }
.addr-div { width: 1px; height: 28px; background: #2a2a2a; }
.search-box { width: 148px; height: 30px; margin-left: 12px; border: 1px solid #555; display: flex; align-items: center; padding-left: 14px; gap: 13px; color: #7c7c7c; white-space: nowrap; flex: none; font-size: 11.500px; }

.body { flex: 1; min-height: 0; display: flex; }
.navpane { width: 215px; flex: none; background: #191919; padding: 16px 1px 0; }
.nv { height: 24px; display: flex; align-items: center; padding-left: 22px; gap: 6px; white-space: nowrap; }
.nv .ic { width: 16px; flex: none; }
.nv-sub { padding-left: 30px; }
.nv-gap { margin-top: 8px; }
.nv-sel { background: #333; height: 22px; margin-top: 9px; margin-bottom: 1px; }
.files { flex: 1; border-left: 2px solid #2a2a2a; padding-top: 2px; background: #202020; overflow: hidden; }
.col-head { height: 28px; line-height: 22px; padding-left: 19px; color: #ccc; display: flex; }
.col-head .fn { width: 408px; flex: none; }
.f { height: 21px; width: 420px; display: flex; align-items: center; margin-left: 17px; padding-left: 3px; gap: 5px; white-space: nowrap; color: #eee; }
.f .fic { width: 15px; flex: none; }
.f .fn { width: 387px; flex: none; }
.ft { flex: none; color: #ddd; }
.f-sel { background: #2a2a2a; }

.status { height: 23px; margin-bottom: 1px; flex: none; background: #333; display: flex; align-items: center; padding-left: 14px; padding-right: 4px; color: #ccc; font-size: 11.500px; }
.st-sep { width: 1px; height: 12px; margin: 0 10px; background: #ddd; }
.st-views { margin-left: auto; display: flex; align-items: center; height: 100%; }
.view { width: 22px; height: 100%; display: flex; align-items: center; justify-content: center; }
.view-on { background: #555; border: 1px solid #8a8a8a; }

/* Dialogs */
.dialog { position: absolute; width: 361px; height: 507px; background: #f0f0f0; color: #000; box-shadow: 0 0 0 1px #333, 1px 2px 6px 1px rgba(0,0,0,.55); display: flex; flex-direction: column; }
.dialog-a { left: 365px; top: 59px; }
.dialog-b { left: 733px; top: 61px; }
.dlg-title { height: 30px; background: #fff; flex: none; display: flex; align-items: center; padding-left: 9px; gap: 8px; color: #111; font-size: 11.800px; }
.dlg-ic { flex: none; }
.dlg-name { white-space: nowrap; }
.dlg-close { margin-left: auto; margin-right: 9px; color: #000; flex: none; }
.dialog-b .dlg-name { color: #8f8f8f; }
.dialog-b .dlg-close { color: #8f8f8f; }
.dlg-tabs { height: 27px; flex: none; display: flex; align-items: flex-end; padding-left: 8px; font-size: 11px; }
.dt { height: 18px; line-height: 19px; text-align: center; background: #f0f0f0; border: 1px solid #d9d9d9; border-bottom: 0; border-right: 0; color: #222; white-space: nowrap; }
.dt:nth-child(1) { width: 48px; }
.dt:nth-child(2) { width: 49px; }
.dt:nth-child(3) { width: 47px; }
.dt:nth-child(4) { width: 92px; border-right: 1px solid #d9d9d9; }
.dt-on { height: 21px; background: #fff; border-right: 1px solid #d9d9d9; margin-bottom: -1px; position: relative; z-index: 1; line-height: 18px; }
.dlg-panel { margin-left: 7px; width: 346px; height: 412px; flex: none; background: #fff; border: 1px solid #d9d9d9; padding: 12px 0 0 13px; }
.listbox { width: 318px; height: 358px; border: 1px solid #828790; position: relative; display: flex; flex-direction: column; overflow: hidden; font-size: 11px; }
.lb-head { height: 22px; margin-top: 2px; margin-bottom: 1px; flex: none; display: flex; font-size: 11px; }
.lh { padding-left: 7px; line-height: 22px; border-right: 1px solid #e0e0e0; }
.lh-prop { width: 128px; }
.lh-val { width: 152px; }
.lb-rows { flex: 1; padding-right: 17px; overflow: hidden; }
.r { height: 18px; display: flex; line-height: 18px; padding-left: 7px; white-space: nowrap; color: #1a1a1a; }
.k { width: 128px; flex: none; letter-spacing: -.2px; }
.grp { height: 24px; display: flex; align-items: center; padding-left: 13px; gap: 5px; color: #0033aa; font-size: 12.500px; }
.grp i { height: 1px; flex: 1; background: #b4bdd6; margin-right: 11px; }
.grp-light i { background: #d8dfec; }
.lb-scroll { position: absolute; right: 1px; top: 1px; bottom: 1px; width: 17px; background: #f0f0f0; display: flex; flex-direction: column; align-items: center; }
.lb-arrow { margin-top: 6px; flex: none; }
.lb-thumb { width: 15px; height: 83px; background: #cdcdcd; margin-top: 42px; flex: none; }
.lb-arrow-end { margin-top: auto; margin-bottom: 4px; }
.dlg-link { display: block; margin-top: 11px; color: #0066cc; text-decoration: underline; white-space: nowrap; font-size: 11px; letter-spacing: -.23px; }
.dlg-btns { flex: 1; display: flex; justify-content: flex-end; align-items: flex-start; padding: 9px 7px 0 0; gap: 8px; font-size: 11.500px; }
.btn { width: 73px; height: 21px; line-height: 20px; text-align: center; background: #e1e1e1; border: 1px solid #adadad; color: #111; }
.btn-default { border: 2px solid #0078d7; line-height: 18px; }
.btn-off { background: #cccccc; border-color: #bfbfbf; color: #7a7a7a; }
```
